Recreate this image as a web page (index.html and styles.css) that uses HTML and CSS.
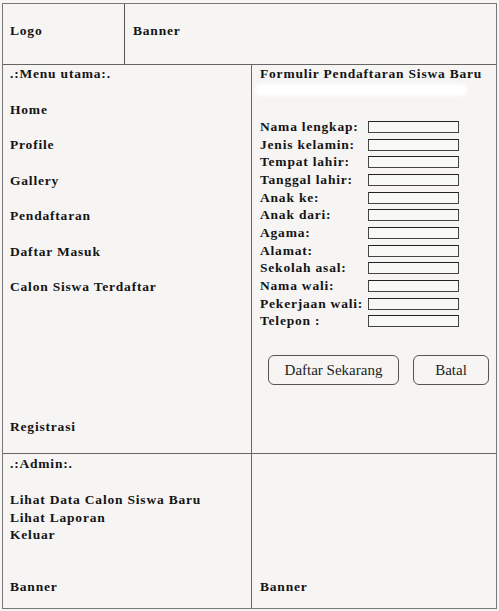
FILE: index.html
```html
<!DOCTYPE html>
<html lang="id">
<head>
  <meta charset="UTF-8">
  <title>Formulir Pendaftaran Siswa Baru</title>
  <link rel="stylesheet" href="styles.css">
</head>
<body>
  <div class="page">
    <header class="top">
      <div class="cell logo">Logo</div>
      <div class="cell banner">Banner</div>
    </header>

    <div class="grid">
      <nav class="cell menu">
        <div class="menu-title">.:Menu utama:.</div>
        <a href="#">Home</a>
        <a href="#">Profile</a>
        <a href="#">Gallery</a>
        <a href="#">Pendaftaran</a>
        <a href="#">Daftar Masuk</a>
        <a href="#">Calon Siswa Terdaftar</a>
        <a href="#" class="bottom-link">Registrasi</a>
      </nav>

      <section class="cell form-cell">
        <h1>Formulir Pendaftaran Siswa Baru</h1>
        <div class="smudge"></div>
        <form class="form">
          <label>Nama lengkap:</label><input type="text">
          <label>Jenis kelamin:</label><input type="text">
          <label>Tempat lahir:</label><input type="text">
          <label>Tanggal lahir:</label><input type="text">
          <label>Anak ke:</label><input type="text">
          <label>Anak dari:</label><input type="text">
          <label>Agama:</label><input type="text">
          <label>Alamat:</label><input type="text">
          <label>Sekolah asal:</label><input type="text">
          <label>Nama wali:</label><input type="text">
          <label>Pekerjaan wali:</label><input type="text">
          <label>Telepon :</label><input type="text">
        </form>
        <div class="actions">
          <button type="button" class="btn-wide">Daftar Sekarang</button>
          <button type="button" class="btn-small">Batal</button>
        </div>
      </section>

      <div class="cell admin">
        <div class="admin-title">.:Admin:.</div>
        <div class="admin-links">
          <a href="#">Lihat Data Calon Siswa Baru</a>
          <a href="#">Lihat Laporan</a>
          <a href="#">Keluar</a>
        </div>
        <div class="foot">Banner</div>
      </div>

      <div class="cell empty">
        <div class="foot">Banner</div>
      </div>
    </div>
  </div>
</body>
</html>
```

FILE: styles.css
```css
/* Base */
* { box-sizing: border-box; margin: 0; padding: 0; }
body {
  background: #f6f5f4;
  font-family: "Liberation Serif", "Times New Roman", serif;
  font-weight: bold;
  font-size: 13.5px;
  letter-spacing: 0.8px;
  color: #141414;
}
a { color: inherit; text-decoration: none; }

/* Frame */
.page {
  margin: 3px 2px 0 2px;
  width: 495px;
  height: 606px;
  border: 1px solid #777;
  display: flex;
  flex-direction: column;
}
.top {
  display: flex;
  height: 61px;
  border-bottom: 1px solid #666;
}
.top .cell {
  padding-top: 20px;
  line-height: 14px;
}
.logo {
  width: 122px;
  padding-left: 7px;
  border-right: 1px solid #555;
}
.banner { padding-left: 8px; }

.grid {
  flex: 1;
  display: grid;
  grid-template-columns: 249px 1fr;
  grid-template-rows: 389px 1fr;
}
.menu, .admin { border-right: 1px solid #666; }
.menu, .form-cell { border-bottom: 1px solid #666; }

/* Menu */
.menu {
  display: flex;
  flex-direction: column;
  padding: 2px 0 19px 7px;
}
.menu-title, .menu a {
  height: 35.5px;
  line-height: 14px;
}
.menu .bottom-link {
  margin-top: auto;
  height: auto;
}

/* Form */
.form-cell { padding: 2px 0 0 8px; }
h1 {
  font-size: 13.5px;
  line-height: 14px;
}
.smudge {
  width: 212px;
  height: 12px;
  margin: 3px 0 0 -5px;
  background: #fff;
  border-radius: 6px;
  filter: blur(1.5px);
}
.form {
  margin-top: 22px;
  display: grid;
  grid-template-columns: 108px 91px;
  grid-auto-rows: 17.7px;
  align-items: center;
}
.form label {
  line-height: 14px;
  white-space: nowrap;
}
.form input {
  width: 91px;
  height: 12px;
  border: 1px solid #444;
  border-top-color: #222;
  background: #f8f8f7;
}
.actions {
  display: flex;
  gap: 14px;
  margin: 25px 0 0 8px;
}
.actions button {
  height: 30px;
  border: 1px solid #555;
  border-radius: 6px;
  background: #f6f5f4;
  font-family: inherit;
  font-size: 15px;
  font-weight: normal;
  letter-spacing: 0;
  color: #222;
}
.btn-wide { width: 131px; }
.btn-small { width: 76px; }

/* Bottom row */
.admin, .empty {
  display: flex;
  flex-direction: column;
  padding: 3px 0 14px 7px;
}
.empty { padding-left: 8px; }
.admin-title { line-height: 14px; }
.admin-links {
  display: flex;
  flex-direction: column;
  margin-top: 20px;
  line-height: 17.5px;
}
.foot {
  margin-top: auto;
  line-height: 14px;
}
```
